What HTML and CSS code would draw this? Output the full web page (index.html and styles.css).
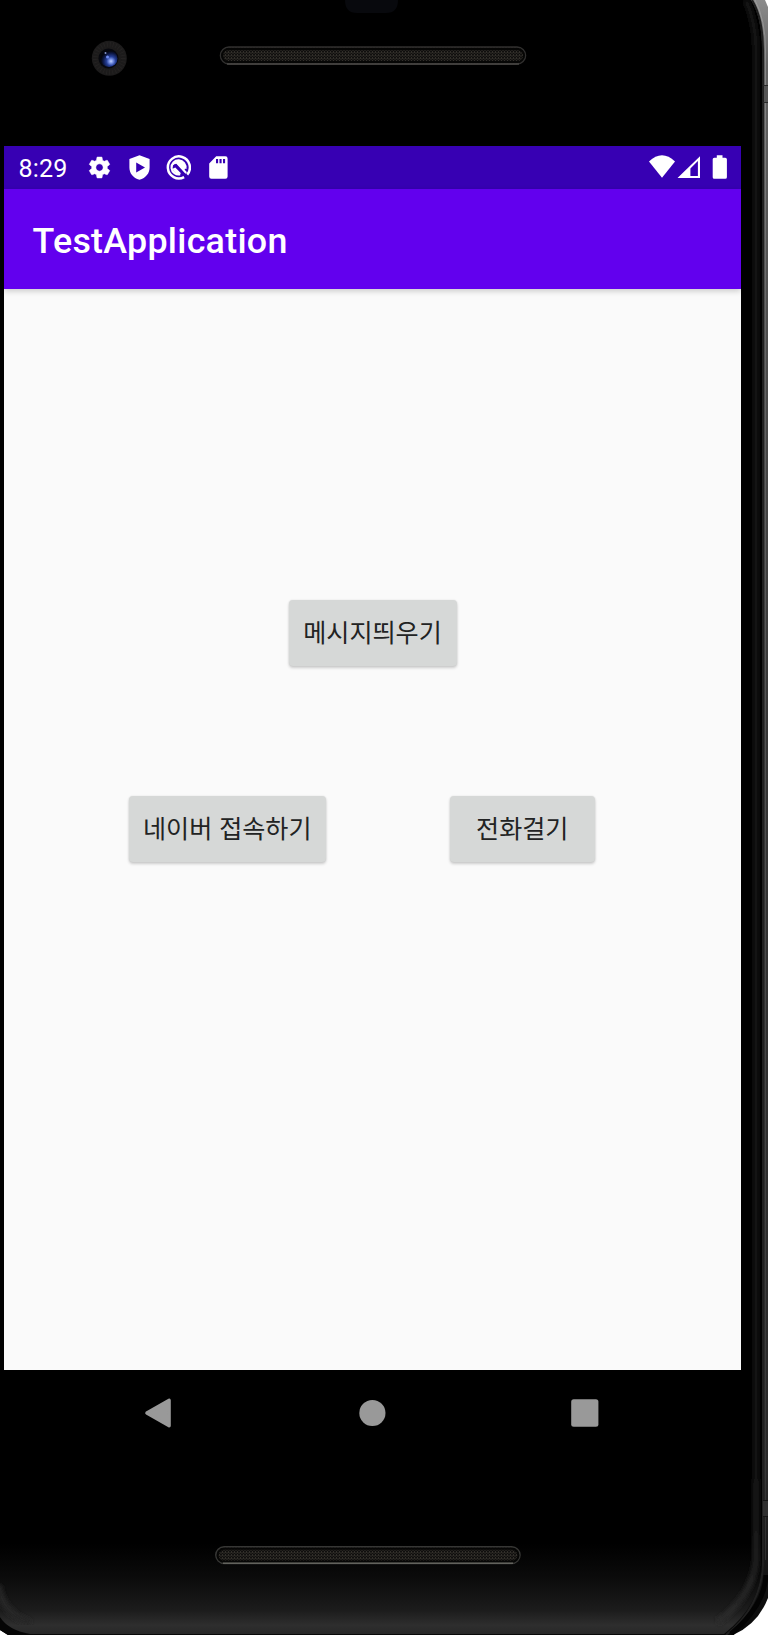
FILE: index.html
```html
<!DOCTYPE html>
<html lang="ko">
<head>
<meta charset="utf-8">
<title>TestApplication</title>
<link rel="stylesheet" href="styles.css">
</head>
<body>
<div class="device">
  <svg class="frame" width="768" height="1635" viewBox="0 0 768 1635" aria-hidden="true">
    <defs>
      <linearGradient id="metal" x1="0" y1="0" x2="0" y2="1">
        <stop offset="0" stop-color="#8b8b8b"/><stop offset=".04" stop-color="#626262"/><stop offset=".18" stop-color="#505050"/><stop offset=".45" stop-color="#363636"/><stop offset=".9" stop-color="#292929"/><stop offset="1" stop-color="#080808"/>
      </linearGradient>
      <linearGradient id="edge" x1="0" y1="0" x2="0" y2="1560" gradientUnits="userSpaceOnUse">
        <stop offset="0" stop-color="#aaa"/><stop offset=".2" stop-color="#777"/><stop offset="1" stop-color="#3c3c3c"/>
      </linearGradient>
      <linearGradient id="glass" x1="0" y1="0" x2="0" y2="1">
        <stop offset="0" stop-color="#000"/><stop offset=".944" stop-color="#000"/><stop offset=".965" stop-color="#0b0b0b"/><stop offset=".985" stop-color="#1c1c1c"/><stop offset=".994" stop-color="#2e2e2e"/><stop offset="1" stop-color="#272727"/>
      </linearGradient>
      <linearGradient id="fade" x1="0" y1="0" x2="0" y2="1">
        <stop offset="0" stop-color="#181818"/><stop offset=".9" stop-color="#171717"/><stop offset=".97" stop-color="#242424"/><stop offset="1" stop-color="#2b2b2b"/>
      </linearGradient>
      <radialGradient id="lens" cx=".62" cy=".66" r=".6">
        <stop offset="0" stop-color="#c4d4ff"/><stop offset=".2" stop-color="#7791e4"/><stop offset=".45" stop-color="#263f98"/><stop offset=".8" stop-color="#0b153f"/><stop offset="1" stop-color="#05060e"/>
      </radialGradient>
      <pattern id="mesh" width="3" height="3" patternUnits="userSpaceOnUse">
        <rect width="3" height="3" fill="#100f0e"/><path d="M.5 0v2M2 1v2" stroke="#322f2a"/>
      </pattern>
      <filter id="soft" x="-20%" y="-5%" width="140%" height="110%"><feGaussianBlur stdDeviation="2.2"/></filter>
      <clipPath id="face"><path d="M0 0H751Q762 18 762 48V1562Q762 1604 724 1634H30Q8 1630 0 1617Z"/></clipPath>
    </defs>
    <path d="M0 0H765L768 7V1598Q758 1624 733 1635H8L0 1630Z" fill="url(#metal)"/>
    <path d="M0 1617Q8 1630 30 1635H8L0 1630Z" fill="#050505"/>
    <path d="M752 0Q763 18 763 50V1565Q761 1607 726 1635" fill="none" stroke="#202020" stroke-width="2"/>
    <path d="M755 0Q765.500 20 765.500 50V1560" fill="none" stroke="url(#edge)" stroke-opacity=".6"/>
    <path d="M766 1575Q765 1605 731 1634" fill="none" stroke="#030303" stroke-width="5"/>
    <path d="M764 85H768V102H764Z" fill="#555"/>
    <path d="M763 85.500H768M763 102.500H768" stroke="#292929"/>
    <path d="M763 1500H768V1516H763Z" fill="#303030"/>
    <path d="M763 1500.500H768M763 1516.500H768" stroke="#151515"/>
    <g clip-path="url(#face)">
      <rect width="768" height="1635" fill="url(#glass)"/>
      <path d="M746 0Q756 24 756 50V1560Q753 1595 718 1622" fill="none" stroke="url(#fade)" stroke-width="6" filter="url(#soft)"/>
      <path d="M-2 1585Q2 1613 30 1623" fill="none" stroke="#272727" stroke-width="7" filter="url(#soft)"/>
    </g>
    <path d="M345 0H398Q398 13 386 13H357Q345 13 345 0Z" fill="#08090d"/>
    <circle cx="109.3" cy="58.3" r="17.5" fill="#1c1b1b"/>
    <circle cx="109.3" cy="58.3" r="14" fill="none" stroke="#242222" stroke-width="5" stroke-dasharray="1 2"/>
    <circle cx="108.5" cy="58.5" r="10" fill="#07080e"/>
    <circle cx="109" cy="58.5" r="8.5" fill="url(#lens)"/>
    <circle cx="105.5" cy="53" r="1" fill="#8393ca"/><circle cx="107.5" cy="57" r="1.5" fill="#6e8af0"/>
    <g fill="url(#mesh)" stroke-width="1.6">
      <rect x="220.5" y="47" width="305" height="17" rx="8.5" stroke="#302f2e"/>
      <rect x="215.8" y="1546.8" width="304.2" height="16.6" rx="8.3" stroke="#363634"/>
    </g>
    <g fill="none" stroke="#060605" stroke-width="2">
      <rect x="222" y="49" width="302" height="13" rx="6.5"/>
      <rect x="217.5" y="1548.8" width="301" height="12.8" rx="6.4"/>
    </g>
    <path d="M227 64H519" stroke="#484744" stroke-width="1.5"/><path d="M223 1563.3H513" stroke="#62625d" stroke-width="1.6"/>
  </svg>

  <main class="screen">
    <header class="status-bar">
      <span class="clock">8:29</span>
      <div class="notifications">
        <svg width="25" height="25" viewBox="0 0 24 24"><path fill="#fff" d="M19.43 12.98c.04-.32.07-.64.07-.98s-.03-.66-.07-.98l2.11-1.65c.19-.15.24-.42.12-.64l-2-3.46c-.12-.22-.39-.3-.61-.22l-2.49 1c-.52-.4-1.08-.73-1.69-.98l-.38-2.65C14.46 2.18 14.25 2 14 2h-4c-.25 0-.46.18-.49.42l-.38 2.65c-.61.25-1.17.59-1.69.98l-2.49-1c-.23-.09-.49 0-.61.22l-2 3.46c-.13.22-.07.49.12.64l2.11 1.65c-.04.32-.07.65-.07.98s.03.66.07.98l-2.11 1.65c-.19.15-.24.42-.12.64l2 3.46c.12.22.39.3.61.22l2.49-1c.52.4 1.08.73 1.69.98l.38 2.65c.03.24.24.42.49.42h4c.25 0 .46-.18.49-.42l.38-2.65c.61-.25 1.17-.59 1.69-.98l2.49 1c.23.09.49 0 .61-.22l2-3.46c.12-.22.07-.49-.12-.64l-2.11-1.65zM12 15.5c-1.93 0-3.5-1.57-3.5-3.5s1.57-3.5 3.5-3.5 3.5 1.57 3.5 3.5-1.57 3.5-3.5 3.5z" stroke="#fff" stroke-width=".5"/></svg>
        <svg width="25" height="25" viewBox="0 0 25 25"><path fill="#fff" fill-rule="evenodd" d="M12.5.2 22.6 4.1V12.5C22.6 18.3 19 22.9 12.5 24.8 6 22.9 2.4 18.3 2.4 12.5V4.1ZM9.2 7.6V17.4L18 12.5Z"/></svg>
        <svg width="25" height="25" viewBox="0 0 25 25" fill="none"><path d="M21.2 19.6A11 11 0 1 0 18.1 22.1" stroke="#fff" stroke-width="2.5"/><path d="M19.4 13.8A7 7 0 1 0 14.2 19.2M6.5 9.2 10.5 7.2 20.2 18" stroke="#fff" stroke-width="2.1"/><path fill="#fff" d="M10 6.2Q16 4 19 9.5 20.1 13 17.8 15.4L10.2 8Z"/><path fill="#fff" d="M6.5 13.8 9.3 12.6 15.2 18.5Q9 20.3 6.5 13.8Z"/><path d="M8.5 9.5 22 22.7" stroke="#3700b3" stroke-width="1.5"/></svg>
        <svg width="25" height="25" viewBox="0 0 25 25"><path fill="#fff" fill-rule="evenodd" d="M10.2 1.2H19.4Q21.6 1.2 21.6 3.4V21.6Q21.6 23.8 19.4 23.8H5.4Q3.2 23.8 3.2 21.6V8.6ZM10 4V8.2H12.1V4ZM13.5 4V8.2H15.6V4ZM17 4V8.2H19.1V4Z"/></svg>
      </div>
      <svg class="signals" width="80" height="26" viewBox="0 0 80 26" fill="#fff">
        <path d="M0 6.600Q13-6.200 26 6.600L13 22.800Z"/>
        <path fill-rule="evenodd" d="M51 1.200V23H28.500ZM48.900 6.100 41.400 13.600V20.900H48.900Z"/>
        <path d="M67.800 2.700V.3H73.500V2.700H76.200Q77.900 2.700 77.900 4.300V22.200Q77.900 23.800 76.200 23.800H65.300Q63.700 23.800 63.700 22.200V4.300Q63.700 2.700 65.300 2.700Z"/>
      </svg>
    </header>
    <div class="app-bar"><h1 class="title">TestApplication</h1></div>
    <section class="content">
      <button class="btn btn-message">메시지띄우기</button>
      <div class="row">
        <button class="btn btn-naver">네이버 접속하기</button>
        <button class="btn btn-call">전화걸기</button>
      </div>
    </section>
    <nav class="nav-bar">
      <svg width="30" height="30" viewBox="0 0 30 30"><path d="M3.800 15 26.200 2.200V27.800Z" fill="#999" stroke="#999" stroke-width="3.2" stroke-linejoin="round"/></svg>
      <svg width="30" height="30" viewBox="0 0 30 30"><circle cx="16.4" cy="15" r="13.1" fill="#999"/></svg>
      <svg width="30" height="30" viewBox="0 0 30 30"><rect x="1.2" y="1.3" width="27.2" height="27.4" rx="2.5" fill="#999"/></svg>
    </nav>
  </main>
</div>
</body>
</html>
```
FILE: styles.css
```css
body {
  margin: 0;
  background: #fff;
  font-family: Roboto, "Noto Sans CJK KR", sans-serif;
}
.device {
  position: relative;
  box-sizing: border-box;
  width: 768px;
  height: 1635px;
  padding: 146px 27px 0 4px;
  overflow: hidden;
}
.frame {
  position: absolute;
  inset: 0;
}
.screen {
  position: relative;
  display: flex;
  flex-direction: column;
  width: 737px;
}
.status-bar {
  display: flex;
  align-items: center;
  box-sizing: border-box;
  height: 43px;
  padding: 0 12px 0 14.5px;
  background: #3700b3;
  color: #fff;
}
.clock {
  width: 68.5px;
  padding-top: 2px;
  font-size: 25.08px;
  letter-spacing: .15px;
  line-height: 29px;
}
.notifications {
  display: flex;
  gap: 14.6px;
}
.signals {
  margin-left: auto;
}
.app-bar {
  position: relative;
  display: flex;
  align-items: center;
  height: 100px;
  padding-left: 28.5px;
  background: #6200ee;
  box-shadow: 0 2px 6px rgba(0, 0, 0, .2);
}
.title {
  margin: 3px 0 0;
  color: #fff;
  font-size: 35.83px;
  font-weight: 500;
  letter-spacing: .27px;
  line-height: 42px;
}
.content {
  display: flex;
  flex-direction: column;
  gap: 130px;
  box-sizing: border-box;
  height: 1081px;
  padding: 311px 0 0 124.5px;
  background: #fafafa;
}
.row {
  display: flex;
  gap: 124px;
}
.btn {
  box-sizing: border-box;
  height: 66px;
  padding: 0 0 3px;
  border: 0;
  border-radius: 4px;
  background: #d6d8d7;
  box-shadow: 0 2px 3px rgba(0, 0, 0, .18), 0 0 2px rgba(0, 0, 0, .1);
  color: #222323;
  font-family: "Noto Sans CJK KR", sans-serif;
  font-size: 25.08px;
  line-height: 37px;
  white-space: nowrap;
}
.btn-message {
  width: 168px;
  margin-left: 160px;
}
.btn-naver {
  width: 197.5px;
}
.btn-call {
  width: 144.5px;
}
.nav-bar {
  display: flex;
  justify-content: space-between;
  align-items: center;
  height: 86px;
  padding: 0 141.5px 0 138.5px;
  background: #000;
}
```
